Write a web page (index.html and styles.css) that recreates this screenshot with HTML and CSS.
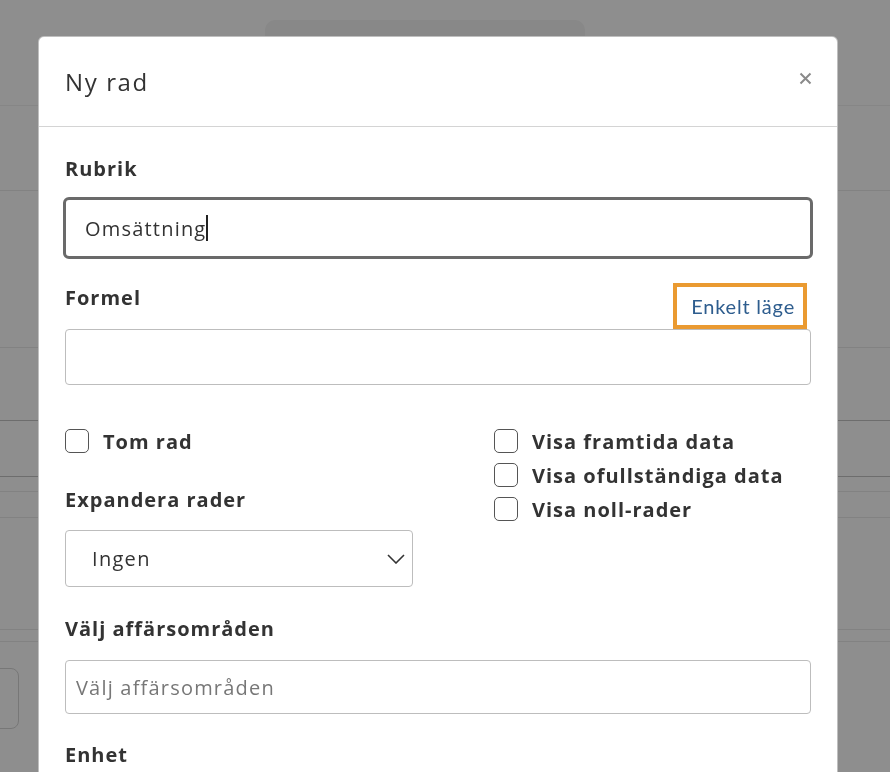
FILE: index.html
```html
<!DOCTYPE html>
<html lang="sv">
<head>
    <meta charset="UTF-8">
    <meta name="viewport" content="width=device-width, initial-scale=1.0">
    <title>Ny rad</title>
    <link rel="stylesheet" href="styles.css">
</head>
<body>
    <!-- Page behind the dialog -->
    <div class="page">
        <div class="page-top">
            <div class="tab"></div>
        </div>
        <div class="line" style="height: 85px"></div>
        <div class="line" style="height: 157px"></div>
        <div class="line dark" style="height: 73px"></div>
        <div class="line dark" style="height: 56px"></div>
        <div class="line" style="height: 15px"></div>
        <div class="line" style="height: 26px"></div>
        <div class="line" style="height: 112px"></div>
        <div class="line" style="height: 12px"></div>
        <div class="page-button"></div>
    </div>

    <div class="backdrop"></div>

    <!-- Dialog: Ny rad -->
    <div class="modal">
        <div class="modal-header">
            <h2>Ny rad</h2>
            <button class="close-button" aria-label="Stäng">
                <svg width="13" height="13" viewBox="0 0 13 13"><path d="M1.5 1.5 L11.5 11.5 M11.5 1.5 L1.5 11.5" stroke="#8a8a8a" stroke-width="2" fill="none"/></svg>
            </button>
        </div>
        <div class="modal-body">
            <label class="field-label label-first" for="rubrik">Rubrik</label>
            <div class="text-input focused" id="rubrik">Omsättning<span class="caret"></span></div>

            <div class="formel-head">
                <label class="field-label" for="formel">Formel</label>
                <a class="mode-link" href="#">Enkelt läge</a>
            </div>
            <div class="text-input plain" id="formel"></div>

            <div class="options">
                <div class="options-left">
                    <label class="check"><span class="box"></span>Tom rad</label>
                    <label class="field-label label-expand">Expandera rader</label>
                    <div class="select">
                        <span>Ingen</span>
                        <svg width="18" height="10" viewBox="0 0 18 10"><path d="M1 1 L9 9 L17 1" stroke="#333" stroke-width="1.6" fill="none"/></svg>
                    </div>
                </div>
                <div class="options-right">
                    <label class="check"><span class="box"></span>Visa framtida data</label>
                    <label class="check"><span class="box"></span>Visa ofullständiga data</label>
                    <label class="check"><span class="box"></span>Visa noll-rader</label>
                </div>
            </div>

            <label class="field-label label-area">Välj affärsområden</label>
            <div class="text-input placeholder">Välj affärsområden</div>

            <label class="field-label label-unit">Enhet</label>
        </div>
    </div>
</body>
</html>
```

FILE: styles.css
```css
/* Base */
body {
    margin: 0;
    font-family: "Open Sans", Arial, sans-serif;
    color: #333;
    background: #fff;
    overflow: hidden;
}

/* Page behind the dialog */
.page-top {
    height: 106px;
    box-sizing: border-box;
    border-bottom: 1px solid #f0f0f0;
    padding-top: 20px;
}

.tab {
    margin-left: 265px;
    width: 320px;
    height: 120px;
    background: #f4f4f4;
    border-radius: 10px;
}

.line {
    box-sizing: border-box;
    border-bottom: 1px solid #eaeaea;
}

.line.dark {
    border-bottom-color: #c4c4c4;
}

.page-button {
    margin-top: 26px;
    margin-left: -20px;
    width: 37px;
    height: 59px;
    border: 1px solid #d6d6d6;
    border-radius: 8px;
}

.backdrop {
    position: fixed;
    top: 0;
    left: 0;
    right: 0;
    bottom: 0;
    background: rgba(0, 0, 0, 0.445);
}

/* Dialog */
.modal {
    position: fixed;
    top: 36px;
    left: 38px;
    width: 800px;
    height: 800px;
    box-sizing: border-box;
    background: #fff;
    border: 1px solid rgba(0, 0, 0, 0.25);
    border-radius: 6px;
}

.modal-header {
    height: 90px;
    box-sizing: border-box;
    border-bottom: 1px solid #d4d4d4;
    display: flex;
    align-items: center;
    justify-content: space-between;
    padding: 0 25px 0 26px;
}

.modal-header h2 {
    margin: 0;
    font-size: 24px;
    font-weight: 400;
    letter-spacing: 1.6px;
    color: #333;
}

.close-button {
    background: none;
    border: none;
    padding: 0;
    cursor: pointer;
    display: flex;
    position: relative;
    top: -3px;
}

.modal-body {
    padding: 0 26px;
}

.field-label {
    display: block;
    font-size: 20px;
    line-height: 24px;
    font-weight: 700;
    letter-spacing: 1px;
    color: #333;
}

.label-first {
    margin-top: 30px;
    margin-bottom: 16px;
}

.text-input {
    box-sizing: border-box;
    width: 746px;
    border: 1px solid #bdbdbd;
    border-radius: 4px;
    font-size: 20px;
    letter-spacing: 1.2px;
    display: flex;
    align-items: center;
}

.text-input.focused {
    height: 62px;
    width: 750px;
    margin-left: -2px;
    border: 3px solid #6a6a6a;
    border-radius: 6px;
    padding-left: 19px;
}

.caret {
    display: inline-block;
    width: 2px;
    height: 26px;
    background: #222;
    margin-left: 0;
}

.text-input.plain {
    height: 56px;
}

.text-input.placeholder {
    height: 54px;
    padding-left: 10px;
    color: #777;
}

.formel-head {
    display: flex;
    justify-content: space-between;
    align-items: flex-start;
    margin-top: 24px;
}

.formel-head .field-label {
    margin-top: 3px;
}

.mode-link {
    height: 46px;
    box-sizing: border-box;
    border: 4px solid #ea9a31;
    padding: 0 8px 0 14px;
    display: flex;
    align-items: center;
    color: #2e5d8e;
    text-decoration: none;
    font-family: Lato, "Open Sans", sans-serif;
    font-size: 20px;
    letter-spacing: 0.8px;
    margin-right: 4px;
}

.options {
    display: grid;
    grid-template-columns: 429px 1fr;
    margin-top: 44px;
}

.check {
    display: flex;
    align-items: center;
    height: 24px;
    margin-bottom: 10px;
    font-size: 20px;
    font-weight: 700;
    letter-spacing: 1px;
    color: #333;
}

.box {
    width: 24px;
    height: 24px;
    box-sizing: border-box;
    border: 1px solid #555;
    border-radius: 5px;
    margin-right: 14px;
    flex-shrink: 0;
}

.options-left .check {
    margin-bottom: 0;
}

.label-expand {
    margin-top: 35px;
    margin-bottom: 18px;
}

.select {
    width: 348px;
    height: 57px;
    box-sizing: border-box;
    border: 1px solid #bdbdbd;
    border-radius: 4px;
    display: flex;
    align-items: center;
    justify-content: space-between;
    padding: 0 7px 0 26px;
    font-size: 20px;
    letter-spacing: 1.3px;
}

.label-area {
    margin-top: 30px;
    margin-bottom: 19px;
}

.label-unit {
    margin-top: 29px;
}
```
